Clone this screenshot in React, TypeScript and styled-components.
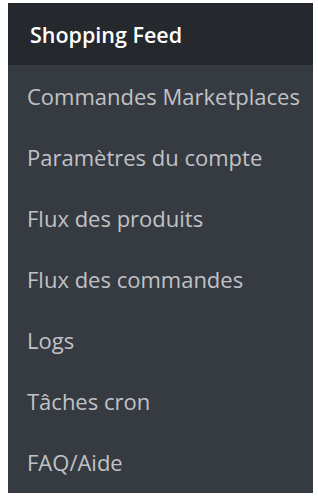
import styled, { createGlobalStyle } from 'styled-components'

const GlobalStyle = createGlobalStyle`
  html, body {
    margin: 0;
    padding: 0;
    background: #ffffff;
  }
  body {
    font-family: 'Open Sans', 'Noto Sans', sans-serif;
  }
`

const Page = styled.div`
  padding: 3px 5px 3px 8px;
`

const Menu = styled.nav`
  width: 305px;
  height: 490px;
  display: flex;
  flex-direction: column;
  background-color: #363a41;
  overflow: hidden;
`

const Header = styled.div`
  height: 63px;
  display: flex;
  align-items: center;
  padding-left: 22px;
  background-color: #25282d;
  color: #ffffff;
  font-size: 21.5px;
  font-weight: 600;
`

const Item = styled.a`
  height: 62px;
  display: flex;
  align-items: center;
  padding-left: 19px;
  color: #c0c3c6;
  font-size: 22px;
  text-decoration: none;
  white-space: nowrap;
`

const items = [
  'Commandes Marketplaces',
  'Paramètres du compte',
  'Flux des produits',
  'Flux des commandes',
  'Logs',
  'Tâches cron',
  'FAQ/Aide',
]

export default function App() {
  return (
    <>
      <GlobalStyle />
      <Page>
        <Menu>
          <Header>Shopping Feed</Header>
          {items.map((label) => (
            <Item key={label} href="#">
              {label}
            </Item>
          ))}
        </Menu>
      </Page>
    </>
  )
}
